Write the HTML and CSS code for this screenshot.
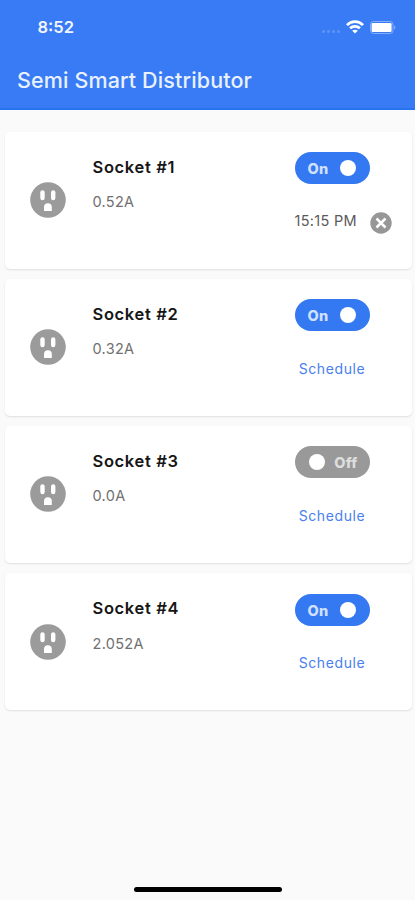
FILE: index.html
```html
<!DOCTYPE html>
<html lang="en">
<head>
<meta charset="utf-8">
<title>Semi Smart Distributor</title>
<link rel="stylesheet" href="styles.css">
</head>
<body>
<svg class="defs" width="0" height="0">
  <symbol id="outlet" viewBox="0 0 36 36">
    <circle cx="18" cy="18" r="17.8" fill="#9b9b9b"/>
    <rect x="10.3" y="8.3" width="4.4" height="10" rx="2.2" fill="#fff"/>
    <rect x="21" y="8.3" width="4.4" height="10" rx="2.2" fill="#fff"/>
    <path d="M14 29v-3.9a3.9 3.9 0 0 1 7.8 0V29z" fill="#fff"/>
  </symbol>
</svg>
<header class="appbar">
  <div class="status">
    <span class="time">8:52</span>
    <div class="indicators">
      <span class="signal"><i></i><i></i><i></i><i></i></span>
      <svg class="wifi" width="18" height="14" viewBox="0 0 18 14" fill="none" stroke="#fff" stroke-width="2.7">
        <path d="M1 5.1C5.3.5 12.7.5 17 5.1"/>
        <path d="M4.1 8.3c2.7-2.7 7.1-2.7 9.8 0"/>
        <path d="M9 13.6 6.2 10.7c1.6-1.4 4-1.4 5.6 0z" fill="#fff" stroke="none"/>
      </svg>
      <svg class="battery" width="26" height="13" viewBox="0 0 26 13">
        <rect x=".5" y=".5" width="22.5" height="12" rx="3" fill="none" stroke="#fff" stroke-opacity=".38"/>
        <rect x="1.6" y="2" width="20" height="9" rx="1.2" fill="#fff"/>
        <path d="M24.2 4.5c1.6.6 1.6 3.4 0 4z" fill="#fff" fill-opacity=".45"/>
      </svg>
    </div>
  </div>
  <h1 class="title">Semi Smart Distributor</h1>
</header>
<main class="list">
  <section class="card">
    <svg class="outlet"><use href="#outlet"/></svg>
    <div class="info"><h2>Socket #1</h2><p>0.52A</p></div>
    <div class="actions">
      <div class="toggle"><span>On</span><i></i></div>
      <div class="timer"><span>15:15 PM</span>
        <svg width="22" height="22" viewBox="0 0 22 22"><circle cx="11" cy="11" r="10.7" fill="#979797"/><path d="M6.5 6.5l9 9M15.5 6.5l-9 9" stroke="#fff" stroke-width="2.5"/></svg>
      </div>
    </div>
  </section>
  <section class="card">
    <svg class="outlet"><use href="#outlet"/></svg>
    <div class="info"><h2>Socket #2</h2><p>0.32A</p></div>
    <div class="actions">
      <div class="toggle"><span>On</span><i></i></div>
      <a class="schedule">Schedule</a>
    </div>
  </section>
  <section class="card">
    <svg class="outlet"><use href="#outlet"/></svg>
    <div class="info"><h2>Socket #3</h2><p>0.0A</p></div>
    <div class="actions">
      <div class="toggle off"><i></i><span>Off</span></div>
      <a class="schedule">Schedule</a>
    </div>
  </section>
  <section class="card">
    <svg class="outlet"><use href="#outlet"/></svg>
    <div class="info"><h2>Socket #4</h2><p>2.052A</p></div>
    <div class="actions">
      <div class="toggle"><span>On</span><i></i></div>
      <a class="schedule">Schedule</a>
    </div>
  </section>
</main>
<footer class="home"><div class="bar"></div></footer>
</body>
</html>
```
FILE: styles.css
```css
* { box-sizing: border-box; margin: 0; padding: 0; }
body {
  height: 900px;
  display: flex;
  flex-direction: column;
  background: #fafafa;
  font-family: Inter, "Liberation Sans", sans-serif;
  overflow: hidden;
}
.defs { display: none; }
.appbar {
  flex: none;
  height: 109.5px;
  background: #387bf5;
  border-bottom: 2px solid #2674ef;
  color: #fff;
}
.status {
  height: 54px;
  padding: 0 19px 0 37.5px;
  display: flex;
  justify-content: space-between;
  align-items: center;
}
.time { font-size: 16.5px; font-weight: 600; color: #f0f5ff; }
.indicators { display: flex; align-items: center; }
.signal { display: flex; gap: 2px; margin: 8px 6px 0 0; }
.signal i { width: 3px; height: 3px; border-radius: 50%; background: #5f95f8; }
.wifi { margin-right: 6px; }
.title {
  padding-left: 17px;
  font-size: 21.5px;
  font-weight: 500;
  line-height: 52px;
  letter-spacing: .13px;
  white-space: nowrap;
  color: #e9f1ff;
}
.list {
  flex: 1;
  display: flex;
  flex-direction: column;
  gap: 10px;
  padding: 22px 3px 0 5px;
}
.card {
  height: 137.2px;
  flex: none;
  display: grid;
  grid-template-columns: 63px 202px 1fr;
  padding-left: 24.5px;
  background: #fff;
  border-radius: 5px;
  box-shadow: 0 1px 2px rgba(0, 0, 0, .11);
}
.outlet { width: 36px; height: 36px; align-self: center; }
.info { padding-top: 24px; }
.info h2 {
  font-size: 16.5px;
  font-weight: 600;
  line-height: 22px;
  letter-spacing: .65px;
  color: #161616;
}
.info p {
  margin-top: 14.5px;
  font-size: 14.5px;
  line-height: 20px;
  letter-spacing: .3px;
  color: #707070;
}
.actions { padding-top: 20.5px; }
.toggle {
  width: 75px;
  height: 32px;
  padding: 0 14px 0 13px;
  display: flex;
  align-items: center;
  justify-content: space-between;
  border-radius: 16px;
  background: #3478f2;
  color: #d0e1ff;
  font-size: 14.5px;
  font-weight: 800;
  letter-spacing: .3px;
}
.toggle span { padding-top: 1px; }
.toggle i { width: 16px; height: 16px; border-radius: 50%; background: #fff; }
.toggle.off { background: #999; color: #dedede; padding: 0 12px 0 14px; }
.timer {
  display: flex;
  align-items: center;
  height: 22px;
  margin-top: 28px;
  font-size: 14.5px;
  letter-spacing: .3px;
  color: #5b5b5b;
}
.timer span { width: 75.5px; padding-bottom: 5px; white-space: nowrap; }
.schedule {
  display: block;
  width: 75px;
  margin-top: 27.5px;
  text-align: center;
  font-size: 14px;
  line-height: 20px;
  letter-spacing: .6px;
  color: #4a80ee;
}
.home { flex: none; height: 14px; display: flex; justify-content: center; padding-top: 1px; }
.bar { width: 148px; height: 5px; border-radius: 3px; background: #000; }
```
